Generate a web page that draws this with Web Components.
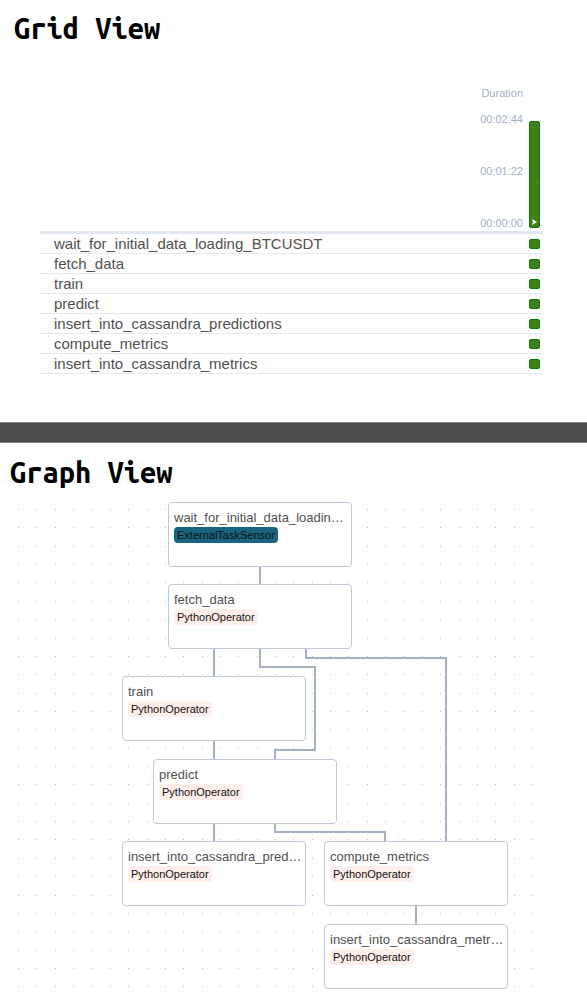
<!DOCTYPE html>
<html lang="en">
<head>
<meta charset="utf-8">
<meta name="viewport" content="width=device-width, initial-scale=1">
<title>DAG views</title>
<style>
  body { margin: 0; background: #fff; color: #51504f; font-family: "Liberation Sans", Arial, sans-serif; }
</style>
</head>
<body>
<view-panel heading="Grid View">
  <run-grid></run-grid>
</view-panel>
<view-divider></view-divider>
<view-panel class="graph" heading="Graph View">
  <task-graph>
    <task-node style="--x:168px;--y:14px" label="wait_for_initial_data_loadin…" kind="sensor">ExternalTaskSensor</task-node>
    <task-node style="--x:168px;--y:96px" label="fetch_data">PythonOperator</task-node>
    <task-node style="--x:122px;--y:188px" label="train">PythonOperator</task-node>
    <task-node style="--x:153px;--y:271px" label="predict">PythonOperator</task-node>
    <task-node style="--x:122px;--y:353px" label="insert_into_cassandra_pred…">PythonOperator</task-node>
    <task-node style="--x:324px;--y:353px" label="compute_metrics">PythonOperator</task-node>
    <task-node style="--x:324px;--y:436px" label="insert_into_cassandra_metr…">PythonOperator</task-node>
  </task-graph>
</view-panel>

<script>
class ViewPanel extends HTMLElement {
  connectedCallback() {
    const root = this.attachShadow({ mode: 'open' });
    root.innerHTML = `
      <style>
        :host { display: block; padding-top: 12px; }
        :host(.graph) { padding-top: 13px; }
        h2 { margin: 0; padding-left: 14px; font: 600 29px/32px "Ubuntu Mono", "DejaVu Sans Mono", monospace; color: #000; }
        :host(.graph) h2 { padding-left: 10px; }
      </style>
      <h2></h2><slot></slot>`;
    root.querySelector('h2').textContent = this.getAttribute('heading');
  }
}

class ViewDivider extends HTMLElement {
  connectedCallback() {
    this.attachShadow({ mode: 'open' }).innerHTML = `
      <style>
        :host { display: block; box-sizing: border-box; height: 21px; background: #4d4b4b; border: solid #858484; border-width: 1px 0; }
      </style>`;
  }
}

class TaskStatus extends HTMLElement {
  connectedCallback() {
    this.attachShadow({ mode: 'open' }).innerHTML = `
      <style>
        :host { display: block; box-sizing: border-box; width: 11px; height: 10px; margin-left: 3px; background: #3f8118; border: 1px solid #0a780a; border-radius: 2px; }
      </style>`;
    this.setAttribute('role', 'img');
    this.setAttribute('aria-label', 'success');
  }
}

class RunBar extends HTMLElement {
  connectedCallback() {
    this.attachShadow({ mode: 'open' }).innerHTML = `
      <style>
        :host { display: flex; box-sizing: border-box; width: 11px; height: 107px; margin: 0 0 3px 3px; align-items: flex-end; justify-content: center; background: #3f8118; border: 1px solid #0a780a; border-radius: 2px; }
        svg { display: block; width: 5px; height: 6px; margin-bottom: 2px; }
      </style>
      <svg viewBox="0 0 5 6" aria-hidden="true"><path d="M0 0L5 3L0 6L1 3Z" fill="#fff"/></svg>`;
  }
}

class RunGrid extends HTMLElement {
  connectedCallback() {
    const tasks = ['wait_for_initial_data_loading_BTCUSDT', 'fetch_data', 'train', 'predict',
      'insert_into_cassandra_predictions', 'compute_metrics', 'insert_into_cassandra_metrics'];
    this.attachShadow({ mode: 'open' }).innerHTML = `
      <style>
        :host { display: block; padding: 0 44px 48px 40px; }
        table { width: 100%; border-spacing: 0; table-layout: fixed; }
        th, td { padding: 0; font-weight: normal; }
        .task { width: auto; } .run { width: 17px; }
        thead th { height: 187px; vertical-align: bottom; border-bottom: 3px solid #e0e7f0; }
        .axis { display: flex; flex-direction: column; align-items: flex-end; gap: 10px; padding-right: 3px; font-size: 11px; line-height: 16px; color: #a3b1c5; }
        .scale { display: flex; flex-direction: column; justify-content: space-between; height: 120px; }
        .ticks { display: grid; background: linear-gradient(#edf0f5 0 0) 0 0 / 100% 1px no-repeat, linear-gradient(#edf0f5 0 0) 0 50% / 100% 1px no-repeat, linear-gradient(#edf0f5 0 0) 0 104px / 100% 1px no-repeat; }
        tbody th, tbody td { box-sizing: border-box; height: 20px; border-bottom: 1px solid #e5eaf2; }
        tbody th { padding-left: 14px; text-align: left; font-size: 15px; line-height: 19px; white-space: nowrap; }
      </style>
      <table>
        <colgroup><col class="task"><col class="run"></colgroup>
        <thead><tr>
          <th><div class="axis"><span>Duration</span><div class="scale"><span>00:02:44</span><span>00:01:22</span><span>00:00:00</span></div></div></th>
          <th><div class="ticks"><run-bar></run-bar></div></th>
        </tr></thead>
        <tbody>${tasks.map(t => `<tr><th scope="row">${t}</th><td><task-status></task-status></td></tr>`).join('')}</tbody>
      </table>`;
  }
}

class TaskNode extends HTMLElement {
  connectedCallback() {
    const root = this.attachShadow({ mode: 'open' });
    root.innerHTML = `
      <style>
        :host { position: absolute; left: var(--x); top: var(--y); box-sizing: border-box; width: 184px; height: 65px; padding: 7px 5px; background: #fff; border: 1px solid #bfc9d9; border-radius: 4px; }
        .label { white-space: nowrap; font-size: 13px; line-height: 16px; }
        .kind { display: table; margin-top: 1px; padding: 0 3px; border-radius: 4px; background: #ffefeb; color: #111; font-size: 11px; line-height: 16px; }
        :host([kind=sensor]) .kind { background: #19647e; }
      </style>
      <div class="label"></div><div class="kind"><slot></slot></div>`;
    root.querySelector('.label').textContent = this.getAttribute('label');
  }
}

class TaskGraph extends HTMLElement {
  connectedCallback() {
    let dots = '';
    for (let r = 0; r < 27; r++)
      for (let c = 0; c < 29; c++)
        dots += `M${Math.round(18 + c * 514 / 28)} ${Math.round(21 + r * 514 / 28)}h1v1h-1z`;
    this.attachShadow({ mode: 'open' }).innerHTML = `
      <style>
        :host { display: block; position: relative; height: 512px; overflow: hidden; }
        svg { display: block; width: 587px; height: 512px; }
      </style>
      <svg viewBox="0 0 587 512" aria-hidden="true">
        <path d="${dots}" fill="#b6b8bc"/>
        <path fill="none" stroke="#a4b1c4" stroke-width="2" d="M260 78V97M214 160V189M260 160V179H315V262H275V272M306 160V170H446V354M214 252V272M214 335V354M275 335V344H385V354M416 417V437"/>
      </svg>
      <slot></slot>`;
  }
}

customElements.define('view-panel', ViewPanel);
customElements.define('view-divider', ViewDivider);
customElements.define('task-status', TaskStatus);
customElements.define('run-bar', RunBar);
customElements.define('run-grid', RunGrid);
customElements.define('task-node', TaskNode);
customElements.define('task-graph', TaskGraph);
</script>
</body>
</html>
